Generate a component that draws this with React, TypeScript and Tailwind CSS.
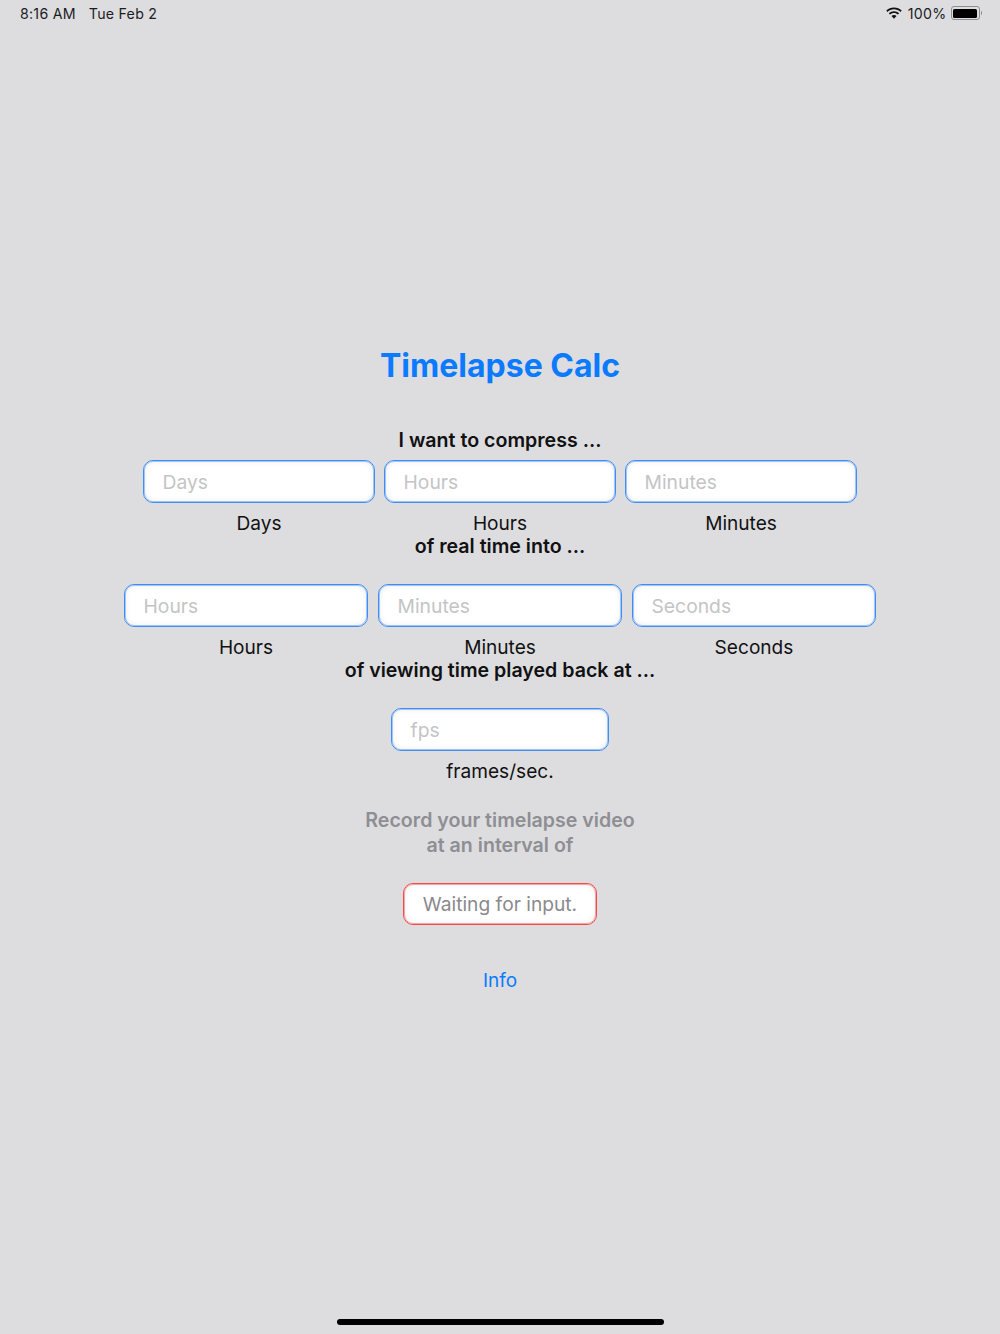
import React from "react";

const font = { fontFamily: "Inter, 'Liberation Sans', sans-serif" };

function Field({ placeholder, label, width }: { placeholder: string; label: string; width: string }) {
  return (
    <div className={`flex flex-col items-center ${width}`}>
      <div className="h-[43px] w-full rounded-[10px] border border-[#3f8ef6] bg-white pl-[18.5px] pt-px flex items-center text-[19.3px] text-[#c4c4c6] shadow-[inset_0_0_0_1px_rgba(63,142,246,0.45),inset_0_0_6px_rgba(0,0,0,0.1)]">
        {placeholder}
      </div>
      <div className="mt-[9px] h-[23px] leading-[23px] text-[19.1px] text-[#111]">{label}</div>
    </div>
  );
}

export default function App() {
  return (
    <div className="h-[1334px] w-[1000px] overflow-hidden bg-[#dddde0] flex flex-col items-center" style={font}>
      <div className="w-full h-[27px] flex items-center justify-between pl-[20px] pr-[18px] text-[#1c1c1e] text-[14.2px]">
        <div className="flex gap-[13px] tracking-[0.25px]">
          <span>8:16 AM</span>
          <span>Tue Feb 2</span>
        </div>
        <div className="flex items-center gap-[4px]">
          <svg width="18" height="13" viewBox="0 0 17 13" fill="#111" className="mr-[1px]">
            <path d="M8.5 2.3c2.5 0 4.8 1 6.5 2.6l1.2-1.3C14.2 1.6 11.500.4 8.500.4S2.800 1.600.8 3.600L2 4.900c1.700-1.600 4-2.600 6.500-2.600z" />
            <path d="M8.500 6c1.500 0 2.900.6 4 1.600l1.200-1.300C12.300 5 10.500 4.200 8.500 4.200S4.700 5 3.300 6.300l1.200 1.300C5.600 6.600 7 6 8.500 6z" />
            <path d="M8.500 8c-1 0-1.800.4-2.500 1l2.500 2.800L11 9c-.7-.6-1.500-1-2.500-1z" />
          </svg>
          <span className="tracking-[0.3px]">100%</span>
          <div className="flex items-center">
            <div className="w-[29px] h-[14px] rounded-[3px] border border-[#8e8e90] p-[1.5px]">
              <div className="w-full h-full rounded-[1.5px] bg-black" />
            </div>
            <div className="ml-[1px] w-[1.5px] h-[4px] rounded-r bg-[#8e8e90]" />
          </div>
        </div>
      </div>

      <h1 className="mt-[320px] h-[38px] leading-[38px] text-[32px] font-bold text-[#0a7aff]">Timelapse Calc</h1>

      <div className="mt-[42px] h-[26px] leading-[26px] text-[19.6px] font-semibold text-[#111]">I want to compress ...</div>
      <div className="mt-[7px] flex gap-[9px]">
        <Field placeholder="Days" label="Days" width="w-[232px]" />
        <Field placeholder="Hours" label="Hours" width="w-[232px]" />
        <Field placeholder="Minutes" label="Minutes" width="w-[232px]" />
      </div>
      <div className="h-[23px] leading-[23px] text-[19.6px] font-semibold text-[#111]">of real time into ...</div>

      <div className="mt-[26px] flex gap-[10px]">
        <Field placeholder="Hours" label="Hours" width="w-[244px]" />
        <Field placeholder="Minutes" label="Minutes" width="w-[244px]" />
        <Field placeholder="Seconds" label="Seconds" width="w-[244px]" />
      </div>
      <div className="h-[23px] leading-[23px] text-[19.6px] font-semibold text-[#111]">of viewing time played back at ...</div>

      <div className="mt-[26px]">
        <Field placeholder="fps" label="frames/sec." width="w-[218px]" />
      </div>

      <div className="mt-[25px] text-center text-[19.6px] leading-[25px] font-semibold text-[#8e8e93]">
        Record your timelapse video
        <br />
        at an interval of
      </div>

      <div className="mt-[25px] h-[42px] w-[194px] rounded-[10px] border border-[#f4494a] bg-white flex items-center justify-center text-[19.2px] text-[#8a8a8e] shadow-[inset_0_0_0_1px_rgba(244,73,74,0.45),inset_0_0_6px_rgba(0,0,0,0.1)]">
        Waiting for input.
      </div>

      <div className="mt-[44px] h-[24px] leading-[24px] text-[19px] text-[#0a7aff]">Info</div>

      <div className="mt-auto mb-[9px] h-[6px] w-[327px] rounded-full bg-black" />
    </div>
  );
}
